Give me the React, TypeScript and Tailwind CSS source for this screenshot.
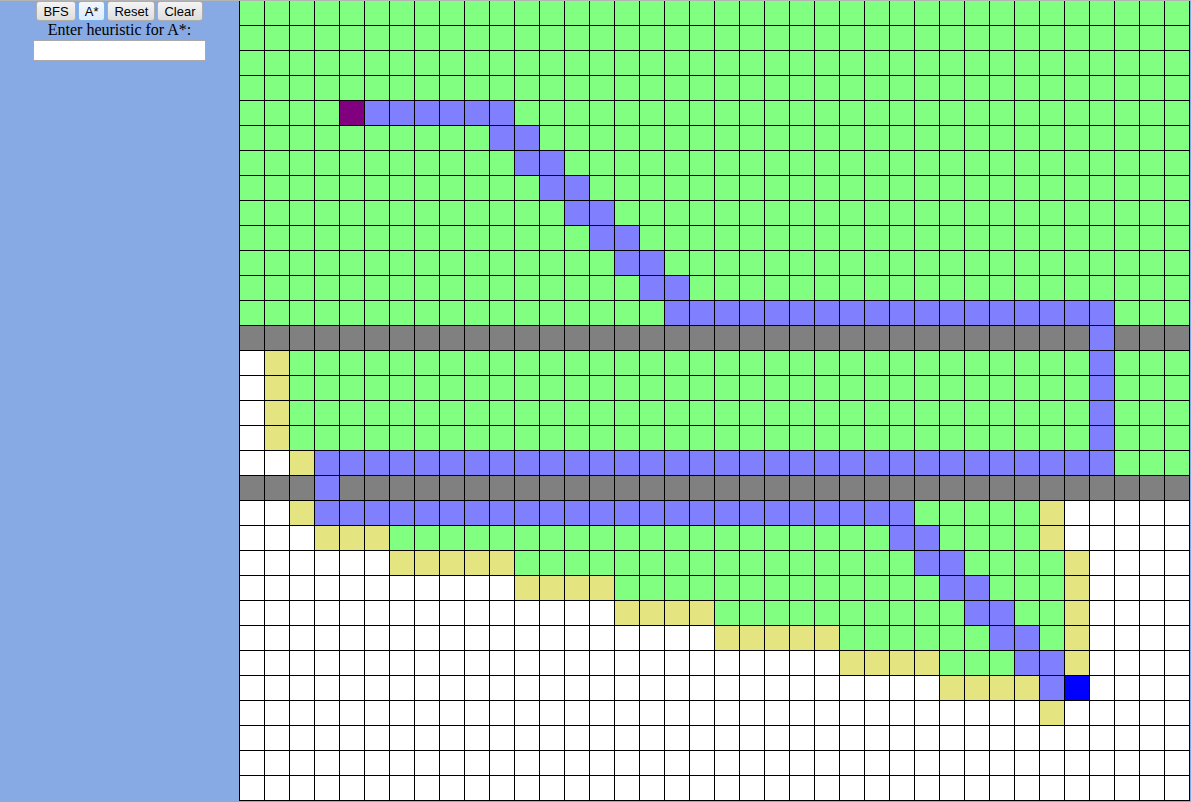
import React from "react";

// G green (visited), W empty, Y frontier, B path, X wall, S start, E goal
const rows: string[] = [
  "G".repeat(38),
  "G".repeat(38),
  "G".repeat(38),
  "G".repeat(38),
  "GGGG" + "S" + "B".repeat(6) + "G".repeat(27),
  "G".repeat(10) + "BB" + "G".repeat(26),
  "G".repeat(11) + "BB" + "G".repeat(25),
  "G".repeat(12) + "BB" + "G".repeat(24),
  "G".repeat(13) + "BB" + "G".repeat(23),
  "G".repeat(14) + "BB" + "G".repeat(22),
  "G".repeat(15) + "BB" + "G".repeat(21),
  "G".repeat(16) + "BB" + "G".repeat(20),
  "G".repeat(17) + "B".repeat(18) + "G".repeat(3),
  "X".repeat(34) + "B" + "X".repeat(3),
  "WY" + "G".repeat(32) + "B" + "G".repeat(3),
  "WY" + "G".repeat(32) + "B" + "G".repeat(3),
  "WY" + "G".repeat(32) + "B" + "G".repeat(3),
  "WY" + "G".repeat(32) + "B" + "G".repeat(3),
  "WWY" + "B".repeat(32) + "G".repeat(3),
  "XXX" + "B" + "X".repeat(34),
  "WWY" + "B".repeat(24) + "G".repeat(5) + "Y" + "W".repeat(5),
  "WWW" + "YYY" + "G".repeat(20) + "BB" + "G".repeat(4) + "Y" + "W".repeat(5),
  "W".repeat(6) + "Y".repeat(5) + "G".repeat(16) + "BB" + "G".repeat(4) + "Y" + "W".repeat(4),
  "W".repeat(11) + "Y".repeat(4) + "G".repeat(13) + "BB" + "G".repeat(3) + "Y" + "W".repeat(4),
  "W".repeat(15) + "Y".repeat(4) + "G".repeat(10) + "BB" + "G".repeat(2) + "Y" + "W".repeat(4),
  "W".repeat(19) + "Y".repeat(5) + "G".repeat(6) + "BB" + "G" + "Y" + "W".repeat(4),
  "W".repeat(24) + "Y".repeat(4) + "G".repeat(3) + "BB" + "Y" + "W".repeat(4),
  "W".repeat(28) + "Y".repeat(4) + "B" + "E" + "W".repeat(4),
  "W".repeat(32) + "Y" + "W".repeat(5),
  "W".repeat(38),
  "W".repeat(38),
  "W".repeat(38),
];

const cellClass: Record<string, string> = {
  G: "bg-[#80ff80]",
  W: "bg-white",
  Y: "bg-[#e4e480]",
  B: "bg-[#8080ff]",
  X: "bg-[#808080]",
  S: "bg-[#800080]",
  E: "bg-[#0000ff]",
};

const Boton = ({ label, active }: { label: string; active?: boolean }) => (
  <button
    className={
      "h-[20px] px-[6px] rounded-[3px] border text-[13px] leading-none text-black font-['Liberation_Sans',Arial,sans-serif] " +
      (active
        ? "border-[#7eb4ea] bg-gradient-to-b from-[#f2f8fd] to-[#dcecfc]"
        : "border-[#adadad] bg-gradient-to-b from-[#f4f4f4] to-[#dedede]")
    }
  >
    {label}
  </button>
);

export default function App() {
  return (
    <div className="w-[1191px] h-[802px] bg-[#88aae4] flex flex-col overflow-hidden">
      <div className="h-px w-full bg-[#b4b4b4]" />
      <div className="flex">
        {/* Panel izquierdo */}
        <div className="w-[239px] flex flex-col items-center">
          <div className="flex gap-[2px]">
            <Boton label="BFS" />
            <Boton label="A*" active />
            <Boton label="Reset" />
            <Boton label="Clear" />
          </div>
          <p className="text-[16px] leading-[18px] text-black font-['Liberation_Serif','Times_New_Roman',serif]">
            Enter heuristic for A*:
          </p>
          <input
            type="text"
            className="mt-px w-[173px] h-[21px] bg-white border border-[#a9a9a9] outline-none"
          />
        </div>
        {/* Cuadrícula */}
        <div
          className="grid grid-cols-[repeat(38,24px)] auto-rows-[24px] gap-px bg-black pl-px pr-px pb-px"
        >
          {rows.map((row, r) =>
            row.split("").map((c, i) => (
              <div key={r + "-" + i} className={cellClass[c]} />
            ))
          )}
        </div>
      </div>
    </div>
  );
}
